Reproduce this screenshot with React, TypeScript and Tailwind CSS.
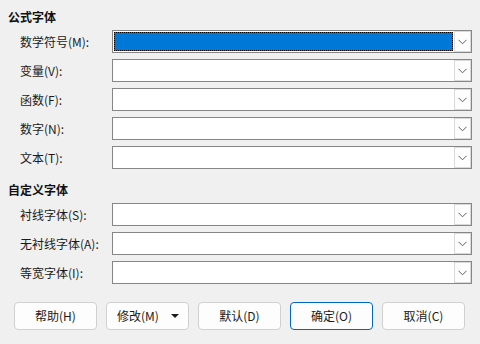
import React from 'react';

const font = { fontFamily: '"Noto Sans CJK SC", "Noto Sans", sans-serif' };

function Chevron() {
  return (
    <svg width="9" height="6" viewBox="0 0 9 6" fill="none">
      <path d="M0.5 0.8 L4.5 4.8 L8.5 0.8" stroke="#5f5f5f" strokeWidth="1" />
    </svg>
  );
}

function Combo({ focused }: { focused?: boolean }) {
  return (
    <div className="flex h-[23px] w-[360px] border border-[#868686] bg-white">
      <div className="flex-1 p-[1px]">
        {focused ? <div className="h-full w-full border border-dotted border-black bg-[#0078d7]" /> : null}
      </div>
      <div className="flex w-[17px] items-center justify-center border border-[#d9d9d9] bg-[#fdfdfd]">
        <Chevron />
      </div>
    </div>
  );
}

function Row({ label, focused }: { label: string; focused?: boolean }) {
  return (
    <div className="flex h-[23px] items-center">
      <div className="w-[112px] pl-[20px] text-[12px] text-[#1b1b1b]">{label}</div>
      <Combo focused={focused} />
    </div>
  );
}

function Heading({ children, className }: { children: React.ReactNode; className?: string }) {
  return <div className={`h-[20px] pl-[8px] text-[12px] font-bold leading-[20px] text-[#111] ${className ?? ''}`}>{children}</div>;
}

export default function App() {
  const buttons = ['帮助(H)', '修改(M)', '默认(D)', '确定(O)', '取消(C)'];
  return (
    <div className="flex h-[344px] w-[480px] flex-col bg-[#f0f0f0]" style={font}>
      <Heading className="mt-[7px] mb-[3px]">公式字体</Heading>
      <div className="flex flex-col gap-[6px]">
        <Row label="数学符号(M):" focused />
        <Row label="变量(V):" />
        <Row label="函数(F):" />
        <Row label="数字(N):" />
        <Row label="文本(T):" />
      </div>
      <Heading className="mt-[11px] mb-[3px]">自定义字体</Heading>
      <div className="flex flex-col gap-[6px]">
        <Row label="衬线字体(S):" />
        <Row label="无衬线字体(A):" />
        <Row label="等宽字体(I):" />
      </div>
      <div className="mt-[18px] flex gap-[9px] pl-[14px]">
        {buttons.map((b) =>
          b === '修改(M)' ? (
            <div key={b} className="flex h-[28px] w-[83px] items-center justify-between rounded-[4px] border border-[#d0d0d0] bg-[#fdfdfd] pl-[10px] pr-[9px] text-[12px] text-[#1b1b1b]">
              <span>{b}</span>
              <svg width="8" height="4" viewBox="0 0 8 4">
                <path d="M0 0 L8 0 L4 4 Z" fill="#1b1b1b" />
              </svg>
            </div>
          ) : (
            <div
              key={b}
              className={`flex h-[28px] w-[83px] items-center justify-center rounded-[4px] border bg-[#fdfdfd] text-[12px] text-[#1b1b1b] ${b === '确定(O)' ? 'border-[#0067c0]' : 'border-[#d0d0d0]'}`}
            >
              {b}
            </div>
          )
        )}
      </div>
    </div>
  );
}
